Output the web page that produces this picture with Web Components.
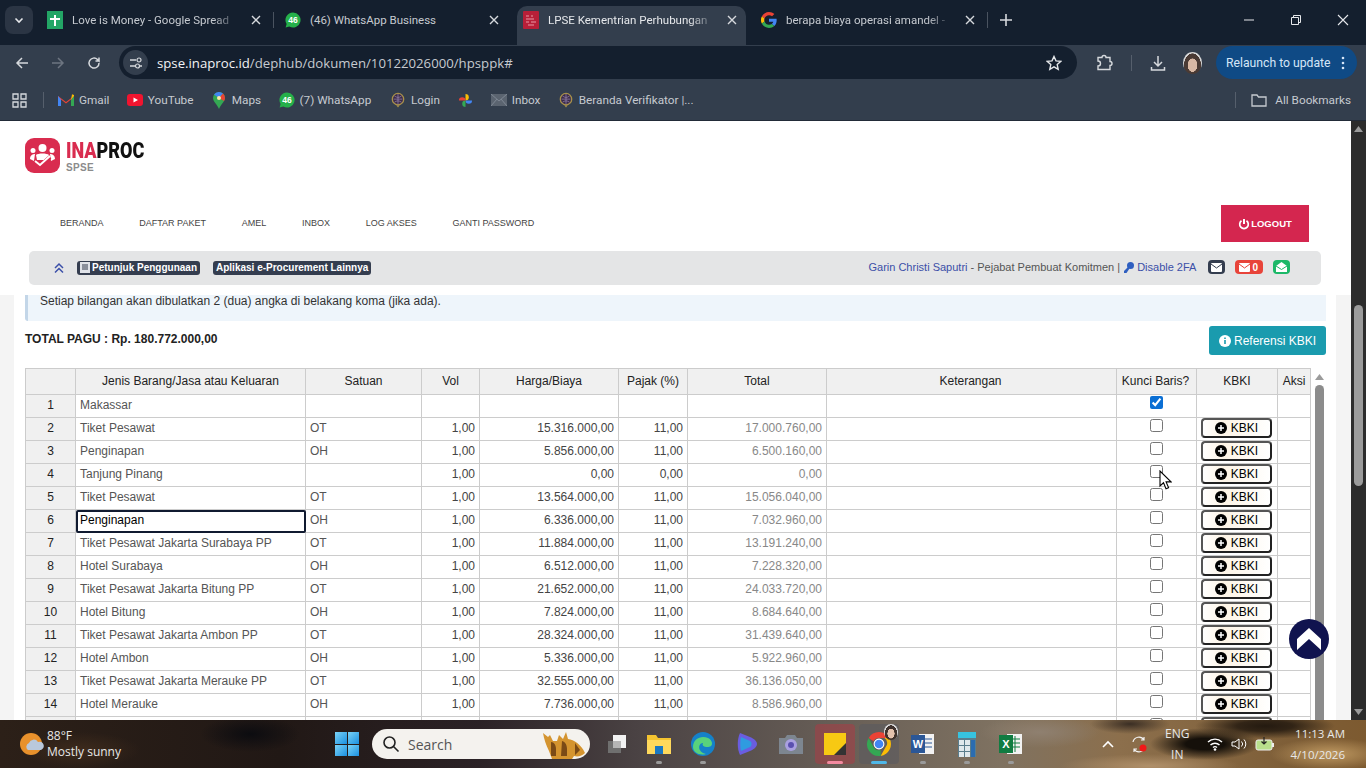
<!DOCTYPE html>
<html>
<head>
<meta charset="utf-8">
<title>LPSE Kementrian Perhubungan</title>
<style>
    html, body { margin: 0; height: 100%; overflow: hidden; background: #fff; }
    body { display: flex; flex-direction: column; width: 1366px; height: 768px; }
    .cursor { position: absolute; left: 1159px; top: 470px; display: block; }
</style>
</head>
<body>
<browser-tabs></browser-tabs>
<browser-toolbar></browser-toolbar>
<bookmark-bar></bookmark-bar>
<page-view>
    <site-header></site-header>
    <hps-content></hps-content>
</page-view>
<os-taskbar></os-taskbar>
<svg class="cursor" width="13" height="21" viewBox="0 0 13 21"><path d="M1 1v15l3.500-3.200 2.500 6 2.600-1.100-2.500-5.800H12z" fill="#fff" stroke="#000" stroke-width="1.100"/></svg>

<script>
'use strict';

const chromeFont = 'Roboto, "Open Sans", sans-serif';
const systemFont = '"Open Sans", "Noto Sans", sans-serif';
const pageFont = '"Liberation Sans", Arial, sans-serif';

const whatsappIcon = (size, label) => `
    <svg width="${size}" height="${size}" viewBox="0 0 16 16">
        <path d="M8 .5a7.500 7.500 0 0 0-6.400 11.400L.6 15.500l3.700-1A7.500 7.500 0 1 0 8 .5z" fill="#25b04a"/>
        <text x="8" y="11" font-size="8.500" font-weight="700" font-family="Liberation Sans" text-anchor="middle" fill="#fff">${label}</text>
    </svg>`;

const sealIcon = `
    <svg width="14" height="18" viewBox="0 0 16 18">
        <circle cx="8" cy="8" r="6.500" fill="#3a2a4a" stroke="#a8904a" stroke-width="1.500"/>
        <path d="M3 8h10M8 2v12M4 4.500c3 2 5 2 8 0M4 11.500c3-2 5-2 8 0" stroke="#9a86b0" stroke-width=".8" fill="none"/>
        <path d="M6 15l2 2.500 2-2.500z" fill="#a8904a"/>
    </svg>`;

const googleIcon = `
    <svg width="16" height="16" viewBox="0 0 48 48">
        <path fill="#ea4335" d="M24 9.500c3.500 0 6.700 1.200 9.200 3.600l6.900-6.900C35.900 2.400 30.500 0 24 0 14.600 0 6.500 5.400 2.600 13.200l8 6.200C12.500 13.600 17.800 9.500 24 9.500z"/>
        <path fill="#4285f4" d="M47 24.500c0-1.600-.1-3.100-.4-4.500H24v9h12.900c-.6 3-2.200 5.500-4.700 7.200l7.700 6c4.500-4.200 7.100-10.300 7.100-17.700z"/>
        <path fill="#fbbc05" d="M10.500 28.600A14.500 14.500 0 0 1 10.500 19.400l-8-6.200a24 24 0 0 0 0 21.600z"/>
        <path fill="#34a853" d="M24 48c6.500 0 11.900-2.100 15.900-5.800l-7.700-6c-2.200 1.400-4.900 2.300-8.200 2.300-6.200 0-11.500-4.100-13.400-9.900l-8 6.200C6.500 42.600 14.600 48 24 48z"/>
    </svg>`;

class BrowserTabs extends HTMLElement {
    constructor()
    {
        super();
        const shadow = this.attachShadow({ mode: 'open' });
        const tabs = [
            { title: 'Love is Money - Google Spread', icon: `<svg width="16" height="18" viewBox="0 0 16 18"><path d="M0 0h16v18H0z" fill="#23a566"/><path d="M7 4h2v3h4v2H9v6H7V9H3V7h4z" fill="#fff"/></svg>` },
            { title: '(46) WhatsApp Business', full: true, icon: whatsappIcon(16, '46') },
            { title: 'LPSE Kementrian Perhubungan', active: true, icon: `<svg width="16" height="18" viewBox="0 0 16 18"><rect width="16" height="18" rx="1" fill="#b81f38"/><path d="M3 5h3M8 5h2M3 8h8M3 11h3M8 11h5M5 14h6" stroke="#e89aa6" stroke-width="1.200"/></svg>` },
            { title: 'berapa biaya operasi amandel -', icon: googleIcon },
        ];
        shadow.innerHTML = `
            <style>
                :host {
                    display: flex;
                    align-items: flex-end;
                    height: 45px;
                    flex: none;
                    background: #141f2e;
                    font: 11.500px ${chromeFont};
                    color: #c6cad0;
                    position: relative;
                }
                .list {
                    width: 28px;
                    height: 28px;
                    margin: 0 3px 11px 5px;
                    border-radius: 8px;
                    background: #2b3544;
                    display: flex;
                    align-items: center;
                    justify-content: center;
                    flex: none;
                }
                .tab {
                    box-sizing: border-box;
                    width: 238px;
                    height: 39px;
                    flex: none;
                    display: flex;
                    align-items: center;
                    padding: 0 12px 11px 11px;
                    gap: 9px;
                    position: relative;
                }
                .tab.active {
                    color: #e6e8eb;
                }
                .tab.active::before {
                    content: '';
                    position: absolute;
                    left: 5px;
                    right: 4px;
                    top: 0;
                    bottom: 0;
                    background: #333e4d;
                    border-radius: 10px 10px 0 0;
                }
                .tab > * { position: relative; }
                .tab.sep::after {
                    content: '';
                    position: absolute;
                    right: 0;
                    top: 6px;
                    height: 16px;
                    width: 1px;
                    background: #4a5360;
                }
                .fav { width: 16px; height: 18px; flex: none; display: flex; align-items: center; justify-content: center; }
                .title {
                    flex: 1;
                    min-width: 0;
                    white-space: nowrap;
                    -webkit-mask-image: linear-gradient(to right, #000 86%, rgba(0, 0, 0, .15) 100%);
                    mask-image: linear-gradient(to right, #000 86%, rgba(0, 0, 0, .15) 100%);
                }
                .title.full { -webkit-mask-image: none; mask-image: none; }
                .close { width: 12px; height: 12px; flex: none; margin-left: 5px; }
                .plus { margin: 0 0 18px 11px; flex: none; display: block; }
                .win {
                    margin-left: auto;
                    display: flex;
                    align-self: stretch;
                    align-items: center;
                }
                .win div { width: 47px; display: flex; justify-content: center; padding-bottom: 5px; }
            </style>
            <div class="list">
                <svg width="12" height="12" viewBox="0 0 12 12"><path d="M2.500 4.500L6 8l3.500-3.500" stroke="#e6e8eb" stroke-width="1.600" fill="none"/></svg>
            </div>
            ${tabs.map((t, i) => `
                <div class="tab ${t.active ? 'active' : ''} ${i === 0 || i === 3 ? 'sep' : ''}">
                    <span class="fav">${t.icon}</span>
                    <span class="title ${t.full ? 'full' : ''}">${t.title}</span>
                    <svg class="close" viewBox="0 0 12 12"><path d="M2 2l8 8M10 2l-8 8" stroke="#d6d9dd" stroke-width="1.400"/></svg>
                </div>`).join('')}
            <svg class="plus" width="14" height="14" viewBox="0 0 14 14"><path d="M7 1v12M1 7h12" stroke="#d6d9dd" stroke-width="1.600"/></svg>
            <div class="win">
                <div><svg width="12" height="12" viewBox="0 0 12 12"><path d="M1 6h10" stroke="#e6e8eb"/></svg></div>
                <div><svg width="12" height="12" viewBox="0 0 12 12"><path d="M1.500 3.500h7v7h-7zM3.500 3.500v-2h7v7h-2" stroke="#e6e8eb" fill="none"/></svg></div>
                <div><svg width="12" height="12" viewBox="0 0 12 12"><path d="M1 1l10 10M11 1L1 11" stroke="#e6e8eb" stroke-width="1.100"/></svg></div>
            </div>
        `;
    }
}

class BrowserToolbar extends HTMLElement {
    constructor()
    {
        super();
        const shadow = this.attachShadow({ mode: 'open' });
        shadow.innerHTML = `
            <style>
                :host {
                    display: flex;
                    align-items: center;
                    height: 38px;
                    flex: none;
                    background: #333e4d;
                    font: 13.200px ${systemFont};
                    color: #c6cad0;
                    box-sizing: border-box;
                    padding-bottom: 3px;
                }
                .btn { width: 36px; display: flex; justify-content: center; flex: none; }
                .nav { padding-left: 4px; display: flex; flex: none; width: 119px; box-sizing: border-box; }
                .omni {
                    width: 958px;
                    height: 33px;
                    flex: none;
                    background: #141f2e;
                    border-radius: 17px;
                    display: flex;
                    align-items: center;
                    padding: 0 8px 0 4px;
                    box-sizing: border-box;
                    gap: 9px;
                }
                .site {
                    width: 25px;
                    height: 25px;
                    border-radius: 50%;
                    background: #333e4d;
                    display: flex;
                    align-items: center;
                    justify-content: center;
                    flex: none;
                }
                .url { flex: 1; white-space: nowrap; }
                .url b { font-weight: 400; color: #f2f3f5; }
                .star { flex: none; margin-right: 7px; display: block; }
                .tools { display: flex; align-items: center; flex: none; margin-left: 18px; }
                .sep { width: 1px; height: 16px; background: #565f6c; margin: 0 17px 0 18px; }
                .avatar {
                    width: 19px;
                    height: 22px;
                    border-radius: 50%;
                    margin: 0 14px 0 16px;
                    background: radial-gradient(ellipse at 50% 60%, #d9b8a4 0 35%, #4a3a34 37% 62%, #d8d8d8 64%);
                }
                .relaunch {
                    width: 141px;
                    height: 33px;
                    box-sizing: border-box;
                    border-radius: 17px;
                    background: #0f4a85;
                    color: #d5e6f8;
                    display: flex;
                    align-items: center;
                    padding-left: 10px;
                    font: 12.200px ${chromeFont};
                    white-space: nowrap;
                    gap: 10px;
                }
            </style>
            <div class="nav">
                <div class="btn"><svg width="16" height="16" viewBox="0 0 16 16"><path d="M14 8H3M8 3L3 8l5 5" stroke="#d6d9dd" stroke-width="1.500" fill="none"/></svg></div>
                <div class="btn"><svg width="16" height="16" viewBox="0 0 16 16"><path d="M2 8h11M8 3l5 5-5 5" stroke="#6d7581" stroke-width="1.500" fill="none"/></svg></div>
                <div class="btn"><svg width="16" height="16" viewBox="0 0 16 16"><path d="M13 8a5 5 0 1 1-1.500-3.500L13 6V2.500M13 6H9.500" stroke="#d6d9dd" stroke-width="1.500" fill="none"/></svg></div>
            </div>
            <div class="omni">
                <div class="site"><svg width="14" height="14" viewBox="0 0 14 14"><path d="M1 4h6M11 10h2M1 10h5" stroke="#d6d9dd" stroke-width="1.300"/><circle cx="10" cy="4" r="2" stroke="#d6d9dd" stroke-width="1.200" fill="none"/><circle cx="8.500" cy="10" r="2" stroke="#d6d9dd" stroke-width="1.200" fill="none"/></svg></div>
                <div class="url"><b>spse.inaproc.id</b>/dephub/dokumen/10122026000/hpsppk#</div>
                <svg class="star" width="16" height="16" viewBox="0 0 16 16"><path d="M8 1.500l2 4.400 4.700.5-3.500 3.200 1 4.700L8 11.900l-4.200 2.400 1-4.700L1.300 6.400 6 5.900z" stroke="#e6e8eb" stroke-width="1.400" fill="none"/></svg>
            </div>
            <div class="tools">
                <svg width="18" height="18" viewBox="0 0 18 18"><path d="M3 4h4a2 2 0 0 1 4 0h4v4a2 2 0 0 1 0 4v4H3v-3.500a2.500 2.500 0 0 0 0-5z" transform="translate(0 -.5)" stroke="#d6d9dd" stroke-width="1.400" fill="none"/></svg>
                <div class="sep"></div>
                <svg width="18" height="18" viewBox="0 0 18 18"><path d="M9 2v10M5 8l4 4 4-4M2.500 13v3h13v-3" stroke="#d6d9dd" stroke-width="1.500" fill="none"/></svg>
                <div class="avatar"></div>
                <div class="relaunch">
                    <span>Relaunch to update</span>
                    <svg width="4" height="14" viewBox="0 0 4 14"><circle cx="2" cy="2" r="1.300" fill="#d5e6f8"/><circle cx="2" cy="7" r="1.300" fill="#d5e6f8"/><circle cx="2" cy="12" r="1.300" fill="#d5e6f8"/></svg>
                </div>
            </div>
        `;
    }
}

class BookmarkBar extends HTMLElement {
    constructor()
    {
        super();
        const shadow = this.attachShadow({ mode: 'open' });
        const items = [
            { label: 'Gmail', icon: `<svg width="16" height="12" viewBox="0 0 16 12"><path d="M0 2l8 6 8-6v10h-3V5.500L8 9.500 3 5.500V12H0z" fill="#ea4335"/><path d="M0 12V2l3 3.500V12z" fill="#4285f4"/><path d="M16 12V2l-3 3.500V12z" fill="#34a853"/><path d="M13 5.500L16 2V1l-2-.8z" fill="#fbbc05"/></svg>` },
            { label: 'YouTube', icon: `<svg width="16" height="12" viewBox="0 0 16 12"><rect width="16" height="12" rx="3" fill="#f0142f"/><path d="M6.500 3.500L11 6l-4.500 2.500z" fill="#fff"/></svg>` },
            { label: 'Maps', icon: `<svg width="12" height="17" viewBox="0 0 12 17"><path d="M6 0a6 6 0 0 1 6 6c0 3.500-4 6-6 11C4 12 0 9.500 0 6a6 6 0 0 1 6-6z" fill="#34a853"/><path d="M1 2.500A6 6 0 0 1 6 0a6 6 0 0 1 4 1.500L6 6z" fill="#4285f4"/><path d="M10 1.500A6 6 0 0 1 12 6c0 1-.4 2-1 3L6 6z" fill="#ea4335"/><circle cx="6" cy="6" r="2" fill="#fbe9a8"/></svg>` },
            { label: '(7) WhatsApp', width: 94, icon: whatsappIcon(16, '46') },
            { label: 'Login', icon: sealIcon },
            { label: '', icon: `<svg width="15" height="15" viewBox="0 0 16 16"><path d="M8 8V1a3.500 3.500 0 0 1 0 7z" fill="#fbbc05"/><path d="M8 8h7a3.500 3.500 0 0 1-7 0z" fill="#4285f4"/><path d="M8 8v7a3.500 3.500 0 0 1 0-7z" fill="#34a853"/><path d="M8 8H1a3.500 3.500 0 0 1 7 0z" fill="#ea4335"/></svg>` },
            { label: 'Inbox', icon: `<svg width="16" height="12" viewBox="0 0 16 12"><rect width="16" height="12" fill="#5b6470"/><path d="M0 0l8 7 8-7M0 12l6-7M16 12l-6-7" stroke="#7e8793" fill="none"/></svg>` },
            { label: 'Beranda Verifikator |...', icon: sealIcon },
        ];
        shadow.innerHTML = `
            <style>
                :host {
                    display: flex;
                    align-items: center;
                    height: 37px;
                    flex: none;
                    background: #333e4d;
                    font: 11.750px ${chromeFont};
                    color: #c6cad0;
                    box-sizing: border-box;
                    padding: 0 15px 3px 12px;
                }
                .apps { flex: none; display: block; }
                .sep { width: 1px; height: 16px; background: #565f6c; flex: none; }
                .sep.a { margin: 0 14px 0 16px; }
                .list { display: flex; gap: 17.400px; align-items: center; }
                .bm { display: flex; align-items: center; gap: 5px; white-space: nowrap; }
                .ico { width: 16px; flex: none; display: flex; justify-content: center; }
                .right { margin-left: auto; display: flex; align-items: center; gap: 8px; white-space: nowrap; }
                .right .sep { margin-right: 7px; }
            </style>
            <svg class="apps" width="15" height="15" viewBox="0 0 15 15"><path d="M1 1h5v5H1zM9 1h5v5H9zM1 9h5v5H1zM9 9h5v5H9z" stroke="#d6d9dd" stroke-width="1.300" fill="none"/></svg>
            <div class="sep a"></div>
            <div class="list">
                ${items.map(i => `<div class="bm" ${i.width ? `style="width:${i.width}px"` : ''}><span class="ico">${i.icon}</span>${i.label ? `<span>${i.label}</span>` : ''}</div>`).join('')}
            </div>
            <div class="right">
                <div class="sep"></div>
                <svg width="16" height="14" viewBox="0 0 16 14"><path d="M1 2h5l1.500 2H15v9H1z" stroke="#c6cad0" stroke-width="1.300" fill="none"/></svg>
                <span>All Bookmarks</span>
            </div>
        `;
    }
}

class PageView extends HTMLElement {
    constructor()
    {
        super();
        const shadow = this.attachShadow({ mode: 'open' });
        shadow.innerHTML = `
            <style>
                :host {
                    display: flex;
                    flex: 1;
                    min-height: 0;
                    overflow: hidden;
                    background: #fff;
                    font: 12px ${pageFont};
                    border-top: 1px solid #222b38;
                    position: relative;
                }
                .main {
                    flex: 1;
                    min-width: 0;
                    display: flex;
                    flex-direction: column;
                    overflow: hidden;
                }
                .scroll {
                    width: 15px;
                    flex: none;
                    background: #2c2c2c;
                    display: flex;
                    flex-direction: column;
                    align-items: center;
                }
                .arrow { flex: none; margin-top: 5px; display: block; }
                .thumb {
                    width: 9px;
                    height: 181px;
                    margin-top: 173px;
                    border-radius: 5px;
                    background: #9b9b9b;
                    flex: none;
                }
                .down { margin: auto 0 5px; }
            </style>
            <div class="main"><slot></slot></div>
            <div class="scroll">
                <svg class="arrow" width="9" height="6" viewBox="0 0 9 6"><path d="M4.500 0L9 6H0z" fill="#9b9b9b"/></svg>
                <div class="thumb"></div>
                <svg class="arrow down" width="9" height="6" viewBox="0 0 9 6"><path d="M0 0h9L4.500 6z" fill="#9b9b9b"/></svg>
            </div>
        `;
    }
}

class SiteHeader extends HTMLElement {
    constructor()
    {
        super();
        const shadow = this.attachShadow({ mode: 'open' });
        const menu = ['BERANDA', 'DAFTAR PAKET', 'AMEL', 'INBOX', 'LOG AKSES', 'GANTI PASSWORD'];
        shadow.innerHTML = `
            <style>
                :host {
                    display: block;
                    flex: none;
                    height: 174px;
                    box-sizing: border-box;
                    padding-top: 17px;
                    background: #fff;
                    color: #333;
                }
                .brand { display: flex; align-items: flex-start; gap: 6px; padding-left: 25px; height: 67px; }
                .logo {
                    width: 35px;
                    height: 35px;
                    border-radius: 9px;
                    background: #d92c4f;
                    display: flex;
                    align-items: center;
                    justify-content: center;
                    flex: none;
                }
                .name { padding-top: 2px; }
                .word {
                    font: 900 22px/21px Roboto, ${pageFont};
                    color: #111;
                    display: block;
                    transform: scaleX(.82);
                    transform-origin: left;
                    white-space: nowrap;
                }
                .word i { font-style: normal; color: #d92c4f; }
                .sub { display: block; margin-top: 2px; font: 700 10px/10px ${pageFont}; color: #8b8b8b; letter-spacing: .3px; }
                .nav { display: flex; align-items: center; padding: 0 42px 2px 42px; height: 37px; box-sizing: border-box; }
                .nav a { font-size: 9px; color: #444; padding: 0 17.750px 0 18px; white-space: nowrap; }
                .logout {
                    margin-left: auto;
                    width: 88px;
                    height: 37px;
                    margin-bottom: -2px;
                    background: #d4264f;
                    color: #fff;
                    font-weight: 700;
                    font-size: 9.500px;
                    display: flex;
                    align-items: center;
                    justify-content: center;
                    gap: 1px;
                }
                .bar {
                    margin: 9px 30px 0 29px;
                    height: 34px;
                    background: #e4e5e6;
                    border-radius: 5px;
                    display: flex;
                    align-items: center;
                    padding: 0 31px 0 24px;
                    font-size: 11px;
                    color: #555;
                    white-space: nowrap;
                }
                .up { margin-right: 12px; flex: none; display: block; }
                .badge {
                    background: #343d4f;
                    color: #fff;
                    font-weight: 700;
                    font-size: 10px;
                    border-radius: 3px;
                    padding: 1px 3px 2px;
                    margin-right: 13px;
                    display: flex;
                    align-items: center;
                    gap: 2px;
                    line-height: 11px;
                }
                .who { margin-left: auto; display: flex; align-items: center; gap: 3px; padding-bottom: 2px; }
                .who a { color: #3b4fa8; }
                .mail {
                    height: 14px;
                    min-width: 11px;
                    border-radius: 4px;
                    padding: 0 3px;
                    display: flex;
                    align-items: center;
                    gap: 2px;
                    color: #fff;
                    font-weight: 700;
                    font-size: 10px;
                }
                .mail.red { padding: 0 5px 0 4px; }
                .boxes { display: flex; gap: 10px; margin-left: 9px; }
            </style>
            <div class="brand">
                <div class="logo">
                    <svg width="27" height="25" viewBox="0 0 27 25">
                        <circle cx="13.500" cy="5" r="4" fill="#fff"/>
                        <circle cx="4" cy="7.500" r="2.500" fill="#fff"/>
                        <circle cx="23" cy="7.500" r="2.500" fill="#fff"/>
                        <path d="M7 12c2-2 11-2 13 0l-1 5H8zM1 16c0-4 3-5 5-5l-1 7zM26 16c0-4-3-5-5-5l1 7z" fill="#fff"/>
                        <path d="M6 19l5 4 10-9" stroke="#d92c4f" stroke-width="4" fill="none"/>
                        <path d="M6 18l5 4 10-9" stroke="#fff" stroke-width="2" fill="none"/>
                    </svg>
                </div>
                <div class="name">
                    <span class="word"><i>INA</i>PROC</span>
                    <span class="sub">SPSE</span>
                </div>
            </div>
            <div class="nav">
                ${menu.map(m => `<a>${m}</a>`).join('')}
                <div class="logout">
                    <svg width="12" height="12" viewBox="0 0 12 12"><path d="M6 1v5" stroke="#fff" stroke-width="2"/><path d="M3.500 2.800a4.300 4.300 0 1 0 5 0" stroke="#fff" stroke-width="1.700" fill="none"/></svg>
                    <span>LOGOUT</span>
                </div>
            </div>
            <div class="bar">
                <svg class="up" width="12" height="12" viewBox="0 0 12 12"><path d="M2 6l4-4 4 4M2 10.500l4-4 4 4" stroke="#3b4fa8" stroke-width="1.500" fill="none"/></svg>
                <div class="badge">
                    <svg width="10" height="11" viewBox="0 0 10 11"><path d="M0 0h10v11H0z" fill="#dfe2e8"/><path d="M2 3h6M2 5h6M2 7h6" stroke="#343d4f"/></svg>
                    <span>Petunjuk Penggunaan</span>
                </div>
                <div class="badge"><span>Aplikasi e-Procurement Lainnya</span></div>
                <div class="who">
                    <a>Garin Christi Saputri</a>
                    <span>- Pejabat Pembuat Komitmen |</span>
                    <svg width="11" height="11" viewBox="0 0 11 11"><circle cx="7.500" cy="3.500" r="3.500" fill="#2f5fc0"/><path d="M5.500 4.500L1 9v2h2.500l3-4.500z" fill="#2f5fc0"/></svg>
                    <a>Disable 2FA</a>
                    <div class="boxes">
                        <div class="mail" style="background:#343d4f"><svg width="11" height="9" viewBox="0 0 11 9"><rect width="11" height="9" rx="1" fill="#fff"/><path d="M0 1l5.500 4L11 1" stroke="#343d4f" fill="none"/></svg></div>
                        <div class="mail red" style="background:#e8443a"><svg width="11" height="9" viewBox="0 0 11 9"><rect width="11" height="9" rx="1" fill="#fff"/><path d="M0 1l5.500 4L11 1" stroke="#e8443a" fill="none"/></svg><span>0</span></div>
                        <div class="mail" style="background:#1cb868"><svg width="11" height="10" viewBox="0 0 11 10"><path d="M0 4l5.500-4L11 4v6H0z" fill="#fff"/><path d="M0 4l5.500 3.500L11 4" stroke="#1cb868" fill="none"/></svg></div>
                    </div>
                </div>
            </div>
        `;
    }
}

class HpsContent extends HTMLElement {
    constructor()
    {
        super();
        const shadow = this.attachShadow({ mode: 'open' });
        const rows = [
            ['Makassar', '', '', '', '', ''],
            ['Tiket Pesawat', 'OT', '1,00', '15.316.000,00', '11,00', '17.000.760,00'],
            ['Penginapan', 'OH', '1,00', '5.856.000,00', '11,00', '6.500.160,00'],
            ['Tanjung Pinang', '', '1,00', '0,00', '0,00', '0,00'],
            ['Tiket Pesawat', 'OT', '1,00', '13.564.000,00', '11,00', '15.056.040,00'],
            ['Penginapan', 'OH', '1,00', '6.336.000,00', '11,00', '7.032.960,00'],
            ['Tiket Pesawat Jakarta Surabaya PP', 'OT', '1,00', '11.884.000,00', '11,00', '13.191.240,00'],
            ['Hotel Surabaya', 'OH', '1,00', '6.512.000,00', '11,00', '7.228.320,00'],
            ['Tiket Pesawat Jakarta Bitung PP', 'OT', '1,00', '21.652.000,00', '11,00', '24.033.720,00'],
            ['Hotel Bitung', 'OH', '1,00', '7.824.000,00', '11,00', '8.684.640,00'],
            ['Tiket Pesawat Jakarta Ambon PP', 'OT', '1,00', '28.324.000,00', '11,00', '31.439.640,00'],
            ['Hotel Ambon', 'OH', '1,00', '5.336.000,00', '11,00', '5.922.960,00'],
            ['Tiket Pesawat Jakarta Merauke PP', 'OT', '1,00', '32.555.000,00', '11,00', '36.136.050,00'],
            ['Hotel Merauke', 'OH', '1,00', '7.736.000,00', '11,00', '8.586.960,00'],
        ];
        const widths = [50, 230, 116, 58, 139, 69, 139, 290, 80, 81, 33];
        const heads = ['', 'Jenis Barang/Jasa atau Keluaran', 'Satuan', 'Vol', 'Harga/Biaya', 'Pajak (%)', 'Total', 'Keterangan', 'Kunci Baris?', 'KBKI', 'Aksi'];
        const plus = `<svg width="12" height="12" viewBox="0 0 12 12"><circle cx="6" cy="6" r="6" fill="#000"/><path d="M6 3v6M3 6h6" stroke="#fff" stroke-width="1.500"/></svg>`;
        const renderRow = (r, i) => `
            <tr>
                <th>${i + 1}</th>
                <td class="${i === 5 ? 'sel' : ''}">${r[0]}</td>
                <td>${r[1]}</td>
                <td class="num">${r[2]}</td>
                <td class="num">${r[3]}</td>
                <td class="num">${r[4]}</td>
                <td class="num ro">${r[5]}</td>
                <td></td>
                <td class="chk"><input type="checkbox" ${i === 0 ? 'checked' : ''}></td>
                <td class="btn">${i === 0 ? '' : `<div class="kbki">${plus}<span>KBKI</span></div>`}</td>
                <td></td>
            </tr>`;
        // the 15th row is only a sliver above the taskbar: its texts are below the fold
        const peekRow = `
            <tr>
                <th></th><td></td><td></td><td></td><td></td><td></td><td></td><td></td>
                <td class="chk"><input type="checkbox"></td>
                <td class="btn"><div class="kbki"></div></td>
                <td></td>
            </tr>`;
        shadow.innerHTML = `
            <style>
                :host {
                    display: block;
                    flex: 1;
                    min-height: 0;
                    overflow: hidden;
                    font: 12px ${pageFont};
                    color: #333;
                    background: linear-gradient(to right, #f4f4f4 14px, #fff 14px, #fff 1336px, #f4f4f4 1336px);
                    padding: 0 25px;
                    width: 1351px;
                    box-sizing: border-box;
                }
                .alert {
                    width: 1301px;
                    height: 26px;
                    box-sizing: border-box;
                    background: #eef5fb;
                    border-left: 3px solid #c3d6e8;
                    border-radius: 0 0 0 3px;
                    padding: 0 0 0 12px;
                    line-height: 13px;
                    color: #333;
                }
                .totals {
                    width: 1301px;
                    display: flex;
                    justify-content: space-between;
                    align-items: flex-start;
                    margin-top: 5px;
                    height: 42px;
                }
                .totals b { margin-top: 6px; color: #222; }
                .ref {
                    width: 117px;
                    height: 29px;
                    background: #1a9bae;
                    color: #fff;
                    border-radius: 3px;
                    display: flex;
                    align-items: center;
                    justify-content: center;
                    gap: 3px;
                }
                .wrap { display: flex; position: relative; height: 360px; align-items: flex-start; }
                table {
                    border-collapse: collapse;
                    table-layout: fixed;
                    width: 1285px;
                    flex: none;
                }
                th, td {
                    border: 1px solid #ccc;
                    height: 23px;
                    padding: 0 4px 2px;
                    box-sizing: border-box;
                    font-weight: 400;
                    white-space: nowrap;
                    overflow: hidden;
                }
                thead th { height: 26px; background: #f0f0f0; color: #222; }
                thead th:nth-child(8), thead th:nth-child(9) { padding: 0 5px 2px 3px; }
                tbody th { background: #f0f0f0; color: #222; }
                tbody td { color: #555; }
                td.num { text-align: right; color: #444; }
                td.ro { color: #888; }
                td.sel { position: relative; outline: 2px solid #101a30; outline-offset: -2px; border-radius: 2px; color: #000; font-size: 12px; }
                td.chk { text-align: center; padding: 0; vertical-align: top; }
                td.chk input { margin: 1px 0 0; width: 13px; height: 13px; display: inline-block; accent-color: #0b6fd4; }
                td.btn { padding: 0 4px; vertical-align: top; }
                .kbki {
                    width: 71px;
                    height: 20px;
                    box-sizing: border-box;
                    border: 2px solid #222;
                    border-left-color: #555;
                    border-top-color: #555;
                    border-radius: 4px;
                    background: linear-gradient(to right, #fff, #fdf4e6 30%, #fff);
                    color: #000;
                    display: flex;
                    align-items: center;
                    justify-content: center;
                    gap: 4px;
                    font-size: 12px;
                }
                .vbar {
                    width: 9px;
                    height: 100%;
                    margin-left: 4px;
                    flex: none;
                    display: flex;
                    flex-direction: column;
                    align-items: center;
                    gap: 5px;
                    padding-top: 6px;
                    box-sizing: border-box;
                }
                .vbar svg { flex: none; display: block; }
                .vbar i { display: block; flex: 1; width: 9px; background: #8c8c8c; border-radius: 5px 5px 0 0; }
                .top {
                    position: absolute;
                    left: 1264px;
                    top: 251px;
                    width: 40px;
                    height: 40px;
                    border-radius: 50%;
                    background: #10134f;
                    display: flex;
                    align-items: center;
                    justify-content: center;
                }
            </style>
            <div class="alert">Setiap bilangan akan dibulatkan 2 (dua) angka di belakang koma (jika ada).</div>
            <div class="totals">
                <b>TOTAL PAGU : Rp. 180.772.000,00</b>
                <div class="ref">
                    <svg width="12" height="12" viewBox="0 0 12 12"><circle cx="6" cy="6" r="6" fill="#fff"/><path d="M6 5v4M6 2.500v1.500" stroke="#1a9bae" stroke-width="1.600"/></svg>
                    <span>Referensi KBKI</span>
                </div>
            </div>
            <div class="wrap">
                <table>
                    <colgroup>${widths.map(w => `<col style="width:${w}px">`).join('')}</colgroup>
                    <thead><tr>${heads.map(h => `<th>${h}</th>`).join('')}</tr></thead>
                    <tbody>${rows.map(renderRow).join('')}${peekRow}</tbody>
                </table>
                <div class="vbar">
                    <svg width="9" height="6" viewBox="0 0 9 6"><path d="M4.500 0L9 6H0z" fill="#9b9b9b"/></svg>
                    <i></i>
                </div>
                <div class="top">
                    <svg width="24" height="22" viewBox="0 0 24 22"><path d="M12 0l12 11v11L12 11 0 22V11z" fill="#fff"/></svg>
                </div>
            </div>
        `;
    }
}

class OsTaskbar extends HTMLElement {
    constructor()
    {
        super();
        const shadow = this.attachShadow({ mode: 'open' });
        const apps = [
            { icon: `<svg width="22" height="22" viewBox="0 0 22 22"><rect x="7" y="2" width="13" height="13" fill="#f2f2f2"/><rect x="2" y="8" width="13" height="12" fill="#6f6f6f"/><rect x="7" y="8" width="8" height="7" fill="#b5b5b5"/></svg>` },
            { dot: '#9a9a9a', icon: `<svg width="26" height="24" viewBox="0 0 26 24"><path d="M1 3h9l2 3h13v16H1z" fill="#f4c430"/><path d="M1 8h24v14H1z" fill="#ffd95c"/><rect x="9" y="14" width="8" height="8" fill="#1a78c2"/></svg>` },
            { dot: '#9a9a9a', icon: `<svg width="26" height="26" viewBox="0 0 26 26"><circle cx="13" cy="13" r="12" fill="#1581c9"/><path d="M3 16C3 7 12 4 18 7c4 2 5 6 3 8-3 2-10 1-8-3 -5 0-6 9 3 11C9 25 3 21 3 16z" fill="#58d27c"/></svg>` },
            { icon: `<svg width="22" height="26" viewBox="0 0 22 26"><path d="M4 2l10 4c5 2 7 5 7 7s-2 5-7 7L4 24C1 18 1 8 4 2z" fill="#6a5de0"/><path d="M5 6l9 4c2 1 2 5 0 6l-9 4C4 16 4 10 5 6z" fill="#2f9be0"/></svg>` },
            { icon: `<svg width="24" height="20" viewBox="0 0 24 20"><path d="M0 4h6l2-3h8l2 3h6v16H0z" fill="#7d8690"/><circle cx="12" cy="11" r="6" fill="#a9a0e0"/><circle cx="12" cy="11" r="3" fill="#5a50b0"/></svg>` },
            { active: 'notes', dot: '#f48aa0', icon: `<svg width="22" height="22" viewBox="0 0 22 22"><rect width="22" height="22" fill="#f7c913"/><path d="M22 10v12H10z" fill="#333"/></svg>` },
            { active: 'chrome', dot: '#4fb8e8', icon: `<svg width="26" height="26" viewBox="0 0 48 48"><path fill="#ea4335" d="M24 2a22 22 0 0 1 19 11H24a11 11 0 0 0-10 6L5 13A22 22 0 0 1 24 2z"/><path fill="#fbbc05" d="M43 13a22 22 0 0 1-16 33l9-16a11 11 0 0 0-2-17z"/><path fill="#34a853" d="M27 46A22 22 0 0 1 5 13l9 17a11 11 0 0 0 13 5z"/><circle cx="24" cy="24" r="9" fill="#4285f4" stroke="#fff" stroke-width="2"/></svg><span class="face"></span>` },
            { dot: '#9a9a9a', icon: `<svg width="24" height="22" viewBox="0 0 24 22"><rect x="8" y="1" width="15" height="20" fill="#f2f2f2"/><path d="M12 6h9M12 10h9M12 14h9" stroke="#2b5797"/><rect x="0" y="2" width="14" height="18" fill="#2b5797"/><text x="7" y="15" font-size="11" font-weight="700" font-family="Liberation Sans" text-anchor="middle" fill="#fff">W</text></svg>` },
            { dot: '#9a9a9a', icon: `<svg width="18" height="25" viewBox="0 0 18 25"><rect width="18" height="25" fill="#5a7d8c"/><rect width="18" height="6" fill="#37c3df"/><path d="M1 8h5v5H1zM7 8h5v5H7zM1 14h5v5H1zM7 14h5v5H7zM1 20h5v5H1zM7 20h5v5H7z" fill="#dfe8ec"/><rect x="13" y="8" width="4" height="17" fill="#2b6cb0"/></svg>` },
            { dot: '#9a9a9a', icon: `<svg width="24" height="22" viewBox="0 0 24 22"><rect x="8" y="1" width="15" height="20" fill="#f2f2f2"/><path d="M12 6h9M12 10h9M12 14h9M16 3v16" stroke="#107c41"/><rect x="0" y="2" width="14" height="18" fill="#107c41"/><text x="7" y="15" font-size="11" font-weight="700" font-family="Liberation Sans" text-anchor="middle" fill="#fff">X</text></svg>` },
        ];
        shadow.innerHTML = `
            <style>
                :host {
                    display: flex;
                    align-items: center;
                    height: 48px;
                    flex: none;
                    box-sizing: border-box;
                    font: 12px ${systemFont};
                    color: #e8e8e8;
                    background:
                        radial-gradient(ellipse 55px 16px at 1205px 24px, #15100a 0, #15100a 35%, rgba(21,16,10,0) 100%),
                        radial-gradient(ellipse 70px 13px at 1265px 6px, #241a10 0, rgba(36,26,16,.85) 40%, rgba(28,21,13,0) 100%),
                        radial-gradient(ellipse 40px 10px at 1130px 4px, #3a2e24 0, rgba(58,46,36,0) 100%),
                        radial-gradient(ellipse 90px 12px at 1150px 46px, #b0906a 0, rgba(176,144,106,0) 100%),
                        radial-gradient(ellipse 60px 16px at 1330px 34px, #c09a62 0, rgba(192,154,98,0) 100%),
                        radial-gradient(ellipse 60px 16px at 1040px 12px, #8f8070 0, rgba(143,128,112,0) 100%),
                        radial-gradient(ellipse 50px 18px at 250px 14px, #0c0c10 0, rgba(12,12,16,0) 100%),
                        radial-gradient(ellipse 60px 18px at 80px 30px, #3d2a1c 0, rgba(61,42,28,0) 100%),
                        linear-gradient(to right, #2c2018 0, #211815 280px, #2b2226 480px, #4b4344 640px, #655c55 820px, #7f7261 1000px, #8c6f4c 1120px, #7d5d36 1300px, #7d5a30 1366px);
                }
                .weather { width: 335px; flex: none; display: flex; align-items: center; gap: 3px; padding-left: 20px; box-sizing: border-box; }
                .weather .t { line-height: 16px; white-space: nowrap; }
                .win { flex: none; width: 24px; height: 24px; display: grid; grid-template-columns: 1fr 1fr; gap: 1px; margin-right: 13px; }
                .win i { display: block; background: linear-gradient(135deg, #7ad3f7, #1a8fe0); }
                .search {
                    width: 218px;
                    height: 30px;
                    flex: none;
                    box-sizing: border-box;
                    border-radius: 15px;
                    background: #f4f2ee;
                    color: #555;
                    display: flex;
                    align-items: center;
                    padding: 0 4px 0 10px;
                    gap: 8px;
                    font-size: 14px;
                }
                .search svg:last-child { margin-left: auto; }
                .apps { display: flex; margin-left: 7px; }
                .app {
                    width: 44px;
                    height: 40px;
                    flex: none;
                    display: flex;
                    align-items: center;
                    justify-content: center;
                    position: relative;
                    box-sizing: border-box;
                    border-radius: 4px;
                }
                .app:first-child { width: 40px; }
                .app.notes { background: rgba(170, 60, 70, .55); width: 40px; margin: 0 2px; }
                .app.chrome { background: rgba(90, 90, 95, .6); width: 40px; margin: 0 2px; }
                .app .dot { position: absolute; bottom: 0; left: 50%; width: 6px; margin-left: -3px; height: 3px; border-radius: 2px; }
                .app.notes .dot, .app.chrome .dot { width: 16px; margin-left: -8px; }
                .face {
                    position: absolute;
                    right: 1px;
                    top: 0;
                    width: 14px;
                    height: 16px;
                    border-radius: 50%;
                    background: radial-gradient(ellipse at 50% 60%, #e2c1ad 0 35%, #3f322d 37% 60%, #ddd 62%);
                }
                .tray { margin-left: auto; display: flex; align-items: center; padding-right: 21px; }
                .lang { text-align: center; line-height: 21px; margin: 0 17px; }
                .clock { text-align: right; line-height: 21px; margin-left: 16px; white-space: nowrap; font-size: 11.500px; }
            </style>
            <div class="weather">
                <svg width="24" height="26" viewBox="0 0 24 26"><circle cx="11" cy="13" r="11" fill="#e8912c"/><path d="M8 19a4 4 0 0 1 1-7 5 5 0 0 1 9-1 4 4 0 0 1 3 8z" fill="#b9c8dc"/></svg>
                <div class="t"><div>88°F</div><div>Mostly sunny</div></div>
            </div>
            <div class="win"><i></i><i></i><i></i><i></i></div>
            <div class="search">
                <svg width="18" height="18" viewBox="0 0 18 18"><circle cx="7.500" cy="7.500" r="5.500" stroke="#222" stroke-width="1.600" fill="none"/><path d="M11.500 11.500l5 5" stroke="#222" stroke-width="1.600"/></svg>
                <span>Search</span>
                <svg width="44" height="30" viewBox="0 0 44 30"><path d="M1 4l5 4 2-2 3 6 4 0 2-6 4 4 3-7 2 7c6 1 13 5 17 14-3 3-7 4-11 3l-2 3H10l-3-8C4 16 2 10 1 4z" fill="#d4942f"/><path d="M9 13c3 0 5 3 5 7v7H9zM20 12c4 1 5 5 5 8v7h-6zM33 14l5 7-5 5z" fill="#7a4a16"/></svg>
            </div>
            <div class="apps">
                ${apps.map(a => `<div class="app ${a.active || ''}">${a.icon}${a.dot ? `<span class="dot" style="background:${a.dot}"></span>` : ''}</div>`).join('')}
            </div>
            <div class="tray">
                <svg width="12" height="8" viewBox="0 0 12 8"><path d="M1 7l5-5 5 5" stroke="#fff" stroke-width="1.600" fill="none"/></svg>
                <svg style="margin-left:16px" width="18" height="22" viewBox="0 0 18 22"><path d="M3 9a6 6 0 0 1 11-2M14 4v3h-3M15 14a6 6 0 0 1-11 2M4 19v-3h3" stroke="#f2f2f2" stroke-width="1.200" fill="none"/><circle cx="13" cy="15" r="3.500" fill="#f01818"/></svg>
                <div class="lang"><div>ENG</div><div>IN</div></div>
                <svg width="16" height="14" viewBox="0 0 16 14"><path d="M1 5a10 10 0 0 1 14 0M3.500 8a6.500 6.500 0 0 1 9 0M6 10.500a3 3 0 0 1 4 0" stroke="#fff" stroke-width="1.400" fill="none"/><circle cx="8" cy="12.500" r="1.300" fill="#fff"/></svg>
                <svg style="margin-left:8px" width="17" height="14" viewBox="0 0 17 14"><path d="M1 5h3l4-3v10l-4-3H1zM10.500 4.500a3.500 3.500 0 0 1 0 5M13 2.500a6.500 6.500 0 0 1 0 9" stroke="#fff" fill="none"/></svg>
                <svg style="margin-left:7px" width="20" height="14" viewBox="0 0 20 14"><rect x="1" y="3" width="16" height="10" rx="2" fill="#b8e08c" stroke="#eee"/><rect x="17" y="6" width="2" height="4" fill="#eee"/><path d="M9 0v7M6.500 4.500L9 7l2.500-2.500" stroke="#222" stroke-width="1.200" fill="none"/></svg>
                <div class="clock"><div>11:13 AM</div><div>4/10/2026</div></div>
            </div>
        `;
    }
}

customElements.define('browser-tabs', BrowserTabs);
customElements.define('browser-toolbar', BrowserToolbar);
customElements.define('bookmark-bar', BookmarkBar);
customElements.define('page-view', PageView);
customElements.define('site-header', SiteHeader);
customElements.define('hps-content', HpsContent);
customElements.define('os-taskbar', OsTaskbar);
</script>
</body>
</html>
